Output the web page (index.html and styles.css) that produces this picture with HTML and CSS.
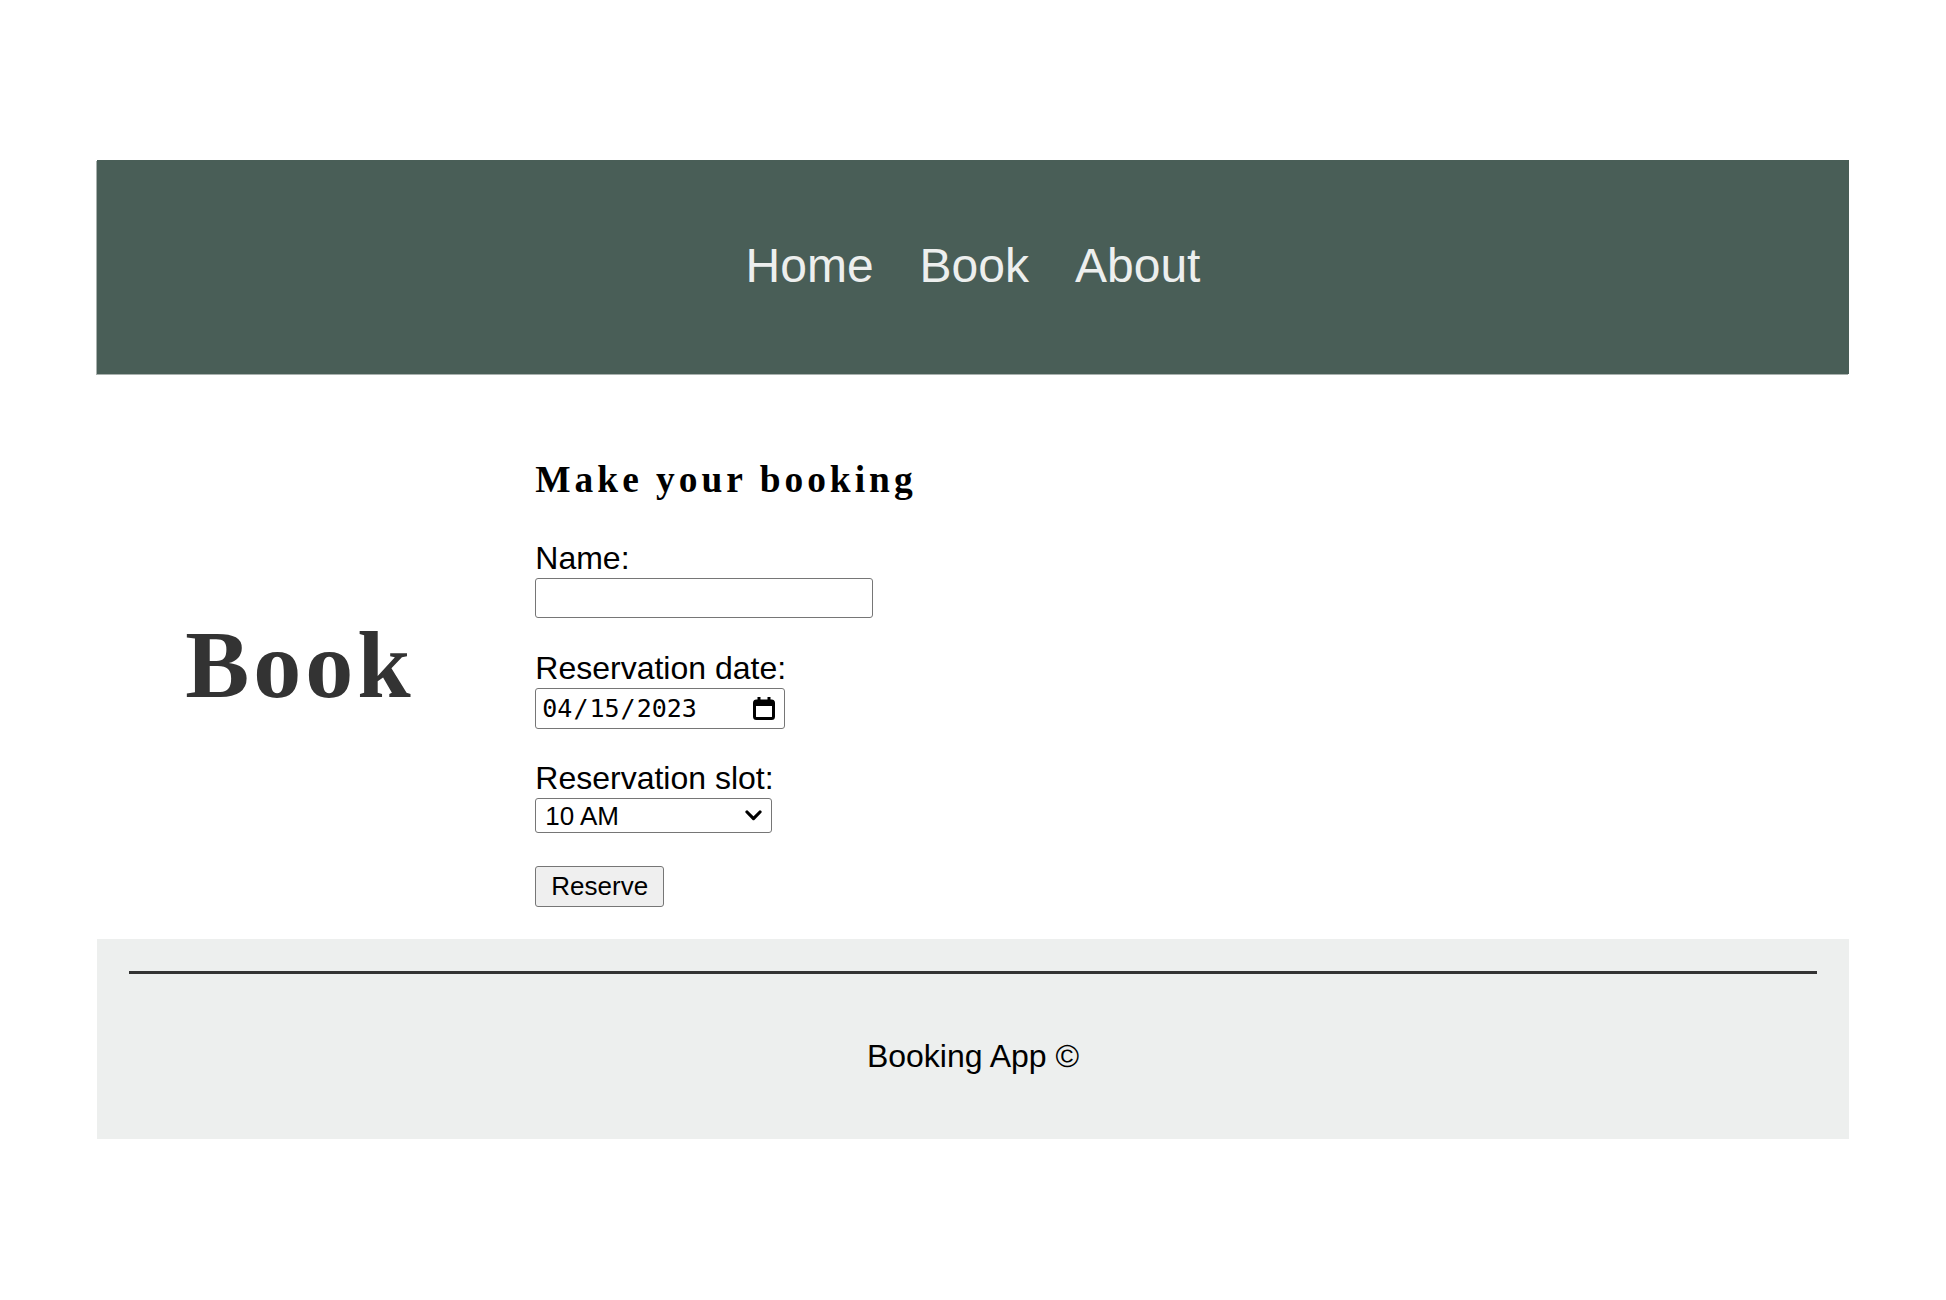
FILE: index.html
```html
<!DOCTYPE html>
<html lang="en">
<head>
<meta charset="utf-8">
<title>Booking App</title>
<link rel="stylesheet" href="styles.css">
</head>
<body>
<div class="page">
  <header class="site-header">
    <nav>
      <ul class="nav">
        <li><a href="#">Home</a></li>
        <li><a href="#">Book</a></li>
        <li><a href="#">About</a></li>
      </ul>
    </nav>
  </header>
  <main class="main">
    <section class="intro">
      <h1>Book</h1>
    </section>
    <form class="booking">
      <h3>Make your booking</h3>
      <div class="field">
        <label for="name">Name:</label>
        <input id="name" class="text-input" type="text">
      </div>
      <div class="field field-date">
        <label for="date">Reservation date:</label>
        <span class="control-wrap">
          <input id="date" class="date-input" type="date" value="2023-04-15">
          <svg class="cal-icon" width="22" height="23" viewBox="0 0 22 23" aria-hidden="true">
            <rect x="1.5" y="4" width="19" height="17.5" rx="2" fill="none" stroke="#000" stroke-width="3"/>
            <rect x="1.5" y="3" width="19" height="6" fill="#000"/>
            <rect x="4.5" y="0" width="3" height="5" fill="#000"/>
            <rect x="14.5" y="0" width="3" height="5" fill="#000"/>
          </svg>
        </span>
      </div>
      <div class="field">
        <label for="slot">Reservation slot:</label>
        <span class="control-wrap">
          <select id="slot" class="select-input">
            <option>10 AM</option>
            <option>11 AM</option>
            <option>12 PM</option>
          </select>
          <svg class="chevron" width="17" height="11" viewBox="0 0 17 11" aria-hidden="true">
            <polyline points="2,2 8.5,8.6 15,2" fill="none" stroke="#000" stroke-width="3.2" stroke-linecap="round" stroke-linejoin="round"/>
          </svg>
        </span>
      </div>
      <button class="btn" type="submit">Reserve</button>
    </form>
  </main>
  <footer class="site-footer">
    <hr class="rule">
    <p class="copy">Booking App ©</p>
  </footer>
</div>
</body>
</html>
```

FILE: styles.css
```css
body {
  margin: 0;
  background: #ffffff;
  color: #000000;
  font-family: "Liberation Sans", Arial, sans-serif;
}

.page {
  width: 90%;
  margin: 160px auto 0;
}

.site-header {
  box-sizing: border-box;
  height: 214px;
  padding-bottom: 4px;
  background: #495E57;
  display: flex;
  align-items: center;
  justify-content: center;
  box-shadow: -1px 1px 0 #a9b1ae;
}

.nav {
  display: flex;
  gap: 46px;
  list-style: none;
  margin: 0;
  padding: 0;
}

.nav a {
  color: #EDEFEE;
  text-decoration: none;
  font-size: 48px;
}

.main {
  display: flex;
  align-items: center;
  padding: 84px 0 32px 88px;
}

.intro {
  width: 350px;
  flex: none;
}

.intro h1 {
  margin: 0 0 37px;
  font-family: "Liberation Serif", "Times New Roman", serif;
  font-size: 96px;
  font-weight: 700;
  letter-spacing: 4px;
  color: #333333;
}

.booking {
  display: flex;
  flex-direction: column;
  align-items: flex-start;
}

.booking h3 {
  margin: 0 0 39px;
  font-family: "Liberation Serif", "Times New Roman", serif;
  font-size: 37.44px;
  font-weight: 700;
  letter-spacing: 4px;
}

.field {
  display: flex;
  flex-direction: column;
  align-items: flex-start;
  margin-bottom: 32px;
}

.field-date {
  margin-bottom: 31px;
}

.field label {
  font-size: 32px;
}

.control-wrap {
  position: relative;
  display: block;
}

.text-input {
  box-sizing: border-box;
  width: 338px;
  height: 40px;
  margin-top: 1px;
  padding: 0 6px;
  border: 1px solid #767676;
  border-radius: 3px;
  font-family: "Liberation Sans", Arial, sans-serif;
  font-size: 26px;
}

.date-input {
  display: block;
  box-sizing: border-box;
  width: 250px;
  height: 41px;
  margin-top: 1px;
  padding: 0 40px 0 5px;
  border: 1px solid #767676;
  border-radius: 3px;
  font-family: "DejaVu Sans Mono", "Liberation Mono", monospace;
  font-size: 25px;
  color: #000;
  background: #fff;
}

.date-input::-webkit-calendar-picker-indicator {
  display: none;
}

.cal-icon {
  position: absolute;
  right: 10px;
  top: 10px;
  pointer-events: none;
}

.select-input {
  display: block;
  box-sizing: border-box;
  width: 237px;
  height: 35px;
  margin-top: 1px;
  padding: 0 34px 0 9px;
  border: 1px solid #767676;
  border-radius: 3px;
  font-family: "Liberation Sans", Arial, sans-serif;
  font-size: 26px;
  color: #000;
  background: #fff;
  appearance: none;
  -webkit-appearance: none;
}

.chevron {
  position: absolute;
  right: 10px;
  top: 13px;
  pointer-events: none;
}

.btn {
  box-sizing: border-box;
  height: 41px;
  margin-top: 1px;
  padding: 0 15px;
  border: 1px solid #767676;
  border-radius: 3px;
  background: #efefef;
  color: #000;
  font-family: "Liberation Sans", Arial, sans-serif;
  font-size: 26px;
}

.site-footer {
  background: #EDEFEE;
  padding: 32px 32px 64px;
}

.rule {
  margin: 0;
  height: 0;
  border: 0;
  border-top: 3px solid #333333;
}

.copy {
  margin: 64px 0 0;
  text-align: center;
  font-size: 32px;
}
```
